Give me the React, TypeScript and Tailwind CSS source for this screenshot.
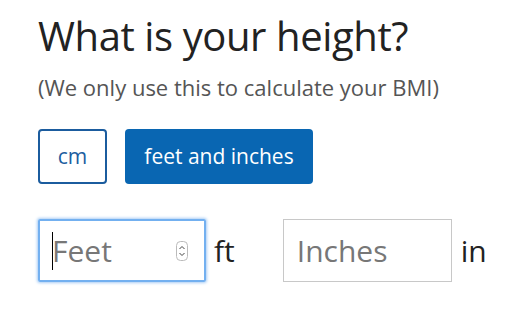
export default function App() {
  return (
    <div className="w-[517px] h-[326px] bg-white pl-[38px] pt-[12px] font-['Open_Sans',sans-serif]">
      <h1 className="text-[40px] leading-[48px] text-[#222] tracking-[-0.4px]">What is your height?</h1>
      <p className="mt-[13px] text-[22px] leading-[28px] text-[#555]">(We only use this to calculate your BMI)</p>
      <div className="mt-[28px] flex gap-[18px]">
        <button className="w-[69px] h-[55px] rounded-[4px] border-2 border-[#1b5c9e] text-[#1d5e9f] text-[21px]">cm</button>
        <button className="w-[188px] h-[55px] rounded-[4px] bg-[#0966b2] text-white text-[21px]">feet and inches</button>
      </div>
      <div className="mt-[35px] flex items-center">
        <div className="w-[168px] h-[63px] border-2 border-[#73b0f0] rounded-[2px] shadow-[0_0_3px_1px_#a9cdf5] flex items-center pl-[12px] pr-[16px]">
          <span className="w-px h-[38px] bg-black" />
          <span className="flex-1 -ml-[1px] text-[30px] text-[#777]">Feet</span>
          <svg width="12" height="20" viewBox="0 0 12 20">
            <rect x="0.5" y="0.5" width="11" height="19" rx="4" fill="white" stroke="#bbb" />
            <path d="M3.5 8 L6 5.5 L8.5 8 M3.5 12 L6 14.5 L8.5 12" fill="none" stroke="#444" strokeWidth="1" />
          </svg>
        </div>
        <span className="ml-[8px] text-[30px] text-[#222]">ft</span>
        <div className="ml-[48px] w-[169px] h-[63px] border border-[#c8c8c8] flex items-center pl-[13px]">
          <span className="text-[30px] text-[#777]">Inches</span>
        </div>
        <span className="ml-[9px] text-[30px] text-[#222]">in</span>
      </div>
    </div>
  );
}
